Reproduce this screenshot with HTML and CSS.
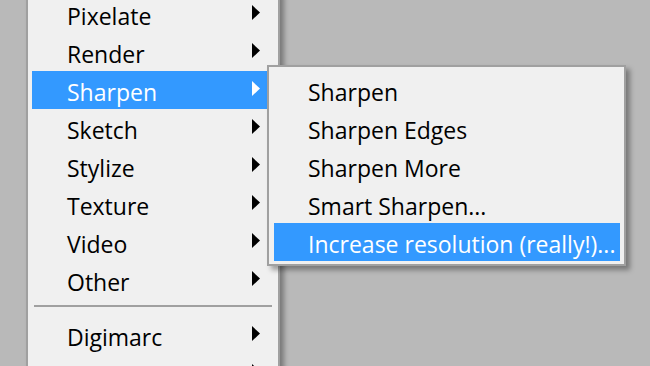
FILE: index.html
```html
<!DOCTYPE html>
<html>
<head>
<meta charset="UTF-8">
<title>Filter menu</title>
<link rel="stylesheet" href="styles.css">
</head>
<body>
	<ul class="menu main-menu">
		<li class="item has-sub">Pixelate<svg class="arrow" width="8" height="15" viewBox="0 0 8 15"><polygon points="0,0 8,7.5 0,15"/></svg></li>
		<li class="item has-sub">Render<svg class="arrow" width="8" height="15" viewBox="0 0 8 15"><polygon points="0,0 8,7.5 0,15"/></svg></li>
		<li class="item has-sub active">Sharpen<svg class="arrow" width="8" height="15" viewBox="0 0 8 15"><polygon points="0,0 8,7.5 0,15"/></svg>
			<ul class="menu sub-menu">
				<li class="item">Sharpen</li>
				<li class="item">Sharpen Edges</li>
				<li class="item">Sharpen More</li>
				<li class="item">Smart Sharpen...</li>
				<li class="item active">Increase resolution (really!)...</li>
			</ul>
		</li>
		<li class="item has-sub">Sketch<svg class="arrow" width="8" height="15" viewBox="0 0 8 15"><polygon points="0,0 8,7.5 0,15"/></svg></li>
		<li class="item has-sub">Stylize<svg class="arrow" width="8" height="15" viewBox="0 0 8 15"><polygon points="0,0 8,7.5 0,15"/></svg></li>
		<li class="item has-sub">Texture<svg class="arrow" width="8" height="15" viewBox="0 0 8 15"><polygon points="0,0 8,7.5 0,15"/></svg></li>
		<li class="item has-sub">Video<svg class="arrow" width="8" height="15" viewBox="0 0 8 15"><polygon points="0,0 8,7.5 0,15"/></svg></li>
		<li class="item has-sub">Other<svg class="arrow" width="8" height="15" viewBox="0 0 8 15"><polygon points="0,0 8,7.5 0,15"/></svg></li>
		<li class="separator"></li>
		<li class="item has-sub">Digimarc<svg class="arrow" width="8" height="15" viewBox="0 0 8 15"><polygon points="0,0 8,7.5 0,15"/></svg></li>
		<li class="item has-sub"><svg class="arrow" width="8" height="15" viewBox="0 0 8 15"><polygon points="0,0 8,7.5 0,15"/></svg></li>
	</ul>
</body>
</html>
```
FILE: styles.css
```css
html, body {
	margin : 0;
	height : 100%;
	overflow : hidden;
}
body {
	background : rgb(185,185,185);
	font-family : "Open Sans", "Noto Sans", sans-serif;
	font-size : 23px;
	color : #000;
}
.menu {
	list-style : none;
	margin : 0;
	background : rgb(240,240,240);
	border : 2px solid rgb(160,160,160);
	box-shadow : 4px 4px 5px rgba(0,0,0,0.35);
}
.main-menu {
	width : 242px;
	margin : -9px 0 0 26px;
	padding : 4px;
	border-top : none;
}
.item {
	position : relative;
	display : flex;
	align-items : center;
	height : 34px;
	line-height : 34px;
	padding : 4px 0 0 35px;
	white-space : nowrap;
}
.item.active {
	background : rgb(51,153,255);
	color : #fff;
}
.arrow {
	position : absolute;
	left : 220px;
	top : 10px;
	fill : #000;
}
.active > .arrow {
	fill : #fff;
}
.separator {
	height : 2px;
	margin : 6px 2px 9px;
	background : rgb(160,160,160);
}
.sub-menu {
	position : absolute;
	left : 235px;
	top : -6px;
	width : 346px;
	padding : 4px 4px 3px 5px;
	color : #000;
}
.sub-menu .item {
	padding-left : 34px;
}
```
